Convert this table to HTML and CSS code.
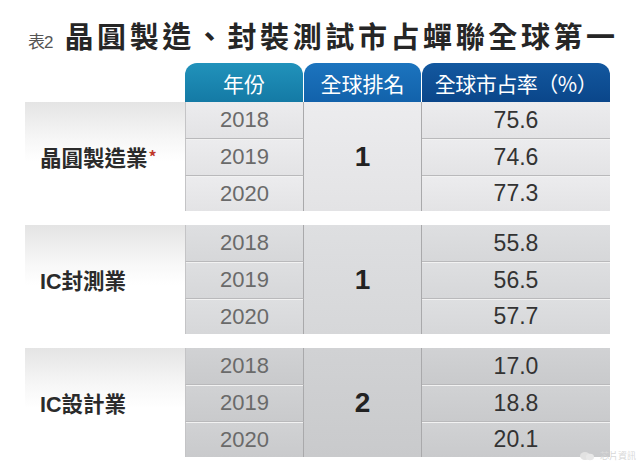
FILE: index.html
```html
<!DOCTYPE html>
<html lang="zh-Hant">
<head>
<meta charset="utf-8">
<title>表2 晶圓製造、封裝測試市占蟬聯全球第一</title>
<link rel="stylesheet" href="styles.css">
</head>
<body>
<div class="page">
  <div class="title">
    <span class="tag">表2</span>
    <span class="main">晶圓製造<span class="comma">、</span>封裝測試市占蟬聯全球第一</span>
  </div>
  <div class="table">
    <div class="head">
      <div class="blank"></div>
      <div class="tab tab-year">年份</div>
      <div class="tab tab-rank">全球排名</div>
      <div class="tab tab-share">全球市占率（%）</div>
    </div>

    <div class="group g1">
      <div class="label">晶圓製造業<span class="star">*</span></div>
      <div class="year r1">2018</div>
      <div class="year r2">2019</div>
      <div class="year r3">2020</div>
      <div class="rank">1</div>
      <div class="share r1">75.6</div>
      <div class="share r2">74.6</div>
      <div class="share r3">77.3</div>
    </div>

    <div class="group g2">
      <div class="label">IC封測業</div>
      <div class="year r1">2018</div>
      <div class="year r2">2019</div>
      <div class="year r3">2020</div>
      <div class="rank">1</div>
      <div class="share r1">55.8</div>
      <div class="share r2">56.5</div>
      <div class="share r3">57.7</div>
    </div>

    <div class="group g3">
      <div class="label">IC設計業</div>
      <div class="year r1">2018</div>
      <div class="year r2">2019</div>
      <div class="year r3">2020</div>
      <div class="rank">2</div>
      <div class="share r1">17.0</div>
      <div class="share r2">18.8</div>
      <div class="share r3">20.1</div>
    </div>
  </div>
  <div class="watermark">
    <svg width="14" height="10" viewBox="0 0 14 10"><ellipse cx="5" cy="5" rx="5" ry="4" fill="#e2e2e2"/><ellipse cx="10" cy="6" rx="4" ry="3.3" fill="#e8e8e8"/></svg>
    <span>芯片資訊</span>
  </div>
</div>
</body>
</html>
```

FILE: styles.css
```css
html, body {
  margin: 0;
  padding: 0;
  background: #ffffff;
}

.page {
  position: relative;
  width: 640px;
  height: 463px;
  overflow: hidden;
  font-family: "Noto Sans CJK TC", "Noto Sans CJK SC", sans-serif;
}

.title {
  display: flex;
  align-items: baseline;
  height: 63px;
  box-sizing: border-box;
  padding: 17px 0 0 28px;
}

.tag {
  font-size: 17px;
  color: #555555;
  font-family: "Liberation Sans", "Noto Sans CJK TC", sans-serif;
  letter-spacing: -1px;
  margin-right: 12px;
}

.main {
  font-size: 29px;
  line-height: 36px;
  font-weight: 700;
  color: #262626;
  letter-spacing: 3.6px;
}

.table {
  margin-left: 25px;
  width: 585px;
}

.head,
.group {
  display: grid;
  grid-template-columns: 160px 119px 118px 188px;
}

.head {
  height: 39px;
}

.tab {
  display: flex;
  align-items: center;
  justify-content: center;
  border-radius: 12px 12px 0 0;
  color: #ffffff;
  font-size: 21px;
  font-weight: 400;
  padding-top: 1px;
}

.tab-year {
  background: linear-gradient(#2192bb, #147aa5);
  margin-right: 1px;
}

.tab-rank {
  background: linear-gradient(#1c74be, #1262ab);
  margin-right: 1px;
}

.tab-share {
  background: linear-gradient(#13589f, #0a468a);
  letter-spacing: -0.5px;
}

.group {
  grid-template-rows: 36px 37px 36px;
  margin-top: 14px;
}

.g1 {
  margin-top: 0;
  --cell: #e3e3e5;
  --cell-top: #ececee;
}

.g2 {
  --cell: #d6d7d9;
  --cell-top: #dedfe1;
}

.g3 {
  --cell: #c9cacc;
  --cell-top: #d1d2d4;
}

.label {
  grid-row: 1 / 4;
  grid-column: 1;
  display: flex;
  align-items: center;
  padding-left: 15px;
  font-family: "Liberation Sans", "Noto Sans CJK TC", sans-serif;
  font-size: 21.5px;
  font-weight: 700;
  color: #2b2b2b;
  background: linear-gradient(#e4e4e4, #f7f7f7 35%, #ffffff 55%);
}

.label .star {
  font-family: "Noto Sans CJK TC", sans-serif;
  color: #c0392b;
  font-size: 16px;
  align-self: flex-start;
  margin-top: 42px;
  margin-left: 1px;
}

.year,
.share,
.rank {
  display: flex;
  align-items: center;
  justify-content: center;
  font-family: "Liberation Sans", Arial, sans-serif;
  background: linear-gradient(var(--cell-top), var(--cell));
}

.year {
  grid-column: 2;
  font-size: 22px;
  color: #6a6a6a;
  border-left: 1px solid #c4c4c6;
  border-right: 1px solid #a9a9ab;
}

.rank {
  grid-column: 3;
  grid-row: 1 / 4;
  font-size: 28px;
  font-weight: 700;
  color: #222222;
  border-right: 1px solid #a9a9ab;
}

.share {
  grid-column: 4;
  font-size: 23px;
  color: #333333;
}

.r1 { grid-row: 1; }
.r2 { grid-row: 2; }
.r3 { grid-row: 3; }

.r2,
.r3 {
  border-top: 1px solid #b9b9bb;
  box-shadow: inset 0 1px 0 #f2f2f2;
}

.watermark {
  position: absolute;
  right: 4px;
  bottom: 1px;
  display: flex;
  align-items: center;
  gap: 6px;
  font-size: 9px;
  color: #d8d8d8;
}
```
